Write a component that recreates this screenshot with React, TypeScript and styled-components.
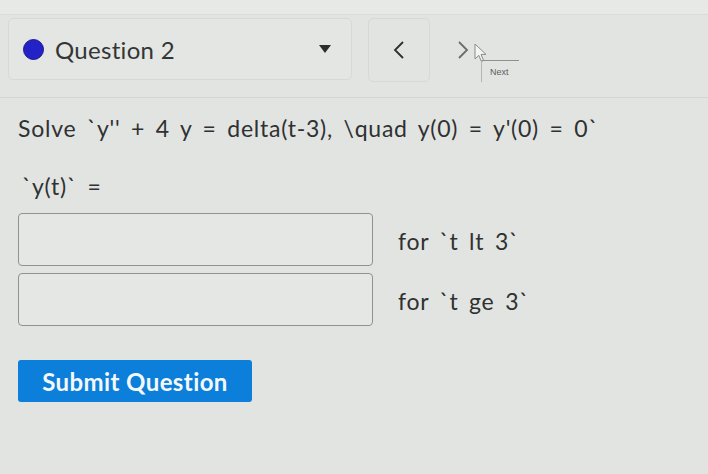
import React from 'react';
import styled, { createGlobalStyle } from 'styled-components';

const GlobalStyle = createGlobalStyle`
  html, body {
    margin: 0;
    padding: 0;
    background: #e2e4e1;
    font-family: Lato, "Open Sans", "Liberation Sans", sans-serif;
    color: #2f3132;
  }
`;

const Page = styled.div`
  width: 708px;
  height: 474px;
  overflow: hidden;
`;

const TopStrip = styled.div`
  height: 14px;
  background: #e7e9e6;
  border-bottom: 1px solid #dadcd9;
`;

const NavBar = styled.div`
  display: flex;
  align-items: flex-start;
  padding: 3px 0 15px 8px;
  border-bottom: 1px solid #d3d5d2;
`;

const QuestionSelect = styled.div`
  width: 344px;
  height: 62px;
  box-sizing: border-box;
  display: flex;
  align-items: center;
  padding: 0 14px;
  border: 1px solid #d7d9d6;
  border-radius: 5px;
  background: #e4e6e3;
`;

const Dot = styled.span`
  width: 19px;
  height: 19px;
  border-radius: 50%;
  background: #2222c6;
  border: 1px solid #1a1a8a;
  margin-right: 11px;
`;

const SelectLabel = styled.span`
  flex: 1;
  font-size: 24px;
  letter-spacing: 0.3px;
  color: #333536;
`;

const Caret = styled.span`
  width: 0;
  height: 0;
  border-left: 6px solid transparent;
  border-right: 6px solid transparent;
  border-top: 8px solid #2b2d2e;
  margin-right: 6px;
`;

const NavButton = styled.div<{ $boxed?: boolean }>`
  width: 62px;
  height: 64px;
  margin-left: ${(p) => (p.$boxed ? '16px' : '2px')};
  box-sizing: border-box;
  display: flex;
  align-items: center;
  justify-content: center;
  border: 1px solid ${(p) => (p.$boxed ? '#d7d9d6' : 'transparent')};
  border-radius: 5px;
`;

const NextWrap = styled.div`
  position: relative;
`;

const Tooltip = styled.div`
  position: absolute;
  left: 51px;
  top: 42px;
  width: 38px;
  height: 22px;
  padding: 6px 0 0 8px;
  box-sizing: border-box;
  border-left: 1px solid #b4b6b3;
  border-top: 1px solid #8f918e;
  font-family: "Liberation Sans", sans-serif;
  font-size: 9px;
  color: #5b5d5e;
`;

const Pointer = styled.svg`
  position: absolute;
  left: 44px;
  top: 25px;
`;

const Content = styled.div`
  padding: 16px 18px 0 18px;
`;

const Text = styled.p`
  margin: 0;
  font-size: 23px;
  line-height: 28px;
  letter-spacing: 0.75px;
  word-spacing: 4px;
  color: #2f3132;
`;

const AnswerLabel = styled(Text)`
  margin: 30px 0 0 4px;
`;

const Rows = styled.div`
  display: flex;
  flex-direction: column;
  gap: 7px;
  margin-top: 13px;
`;

const AnswerRow = styled.div`
  display: flex;
  align-items: center;
  gap: 25px;
`;

const AnswerInput = styled.input`
  width: 355px;
  height: 53px;
  box-sizing: border-box;
  border: 1px solid #90928f;
  border-radius: 4px;
  background: #e5e7e4;
  outline: none;
`;

const Condition = styled(Text)`
  margin-top: 2px;
`;

const SubmitButton = styled.button`
  margin-top: 34px;
  width: 234px;
  height: 42px;
  border: none;
  border-radius: 3px;
  background: #0b7fd9;
  color: #f4f8fb;
  font-family: Lato, "Open Sans", sans-serif;
  font-weight: 700;
  font-size: 24px;
  letter-spacing: 0.4px;
  padding: 0;
`;

export default function App() {
  return (
    <Page>
      <GlobalStyle />
      <TopStrip />
      <NavBar>
        <QuestionSelect>
          <Dot />
          <SelectLabel>Question 2</SelectLabel>
          <Caret />
        </QuestionSelect>
        <NavButton $boxed>
          <svg width="12" height="20" viewBox="0 0 12 20">
            <path d="M10 2 L2 10 L10 18" fill="none" stroke="#2c2e2f" strokeWidth="1.8" />
          </svg>
        </NavButton>
        <NextWrap>
          <NavButton>
            <svg width="12" height="20" viewBox="0 0 12 20">
              <path d="M2 2 L10 10 L2 18" fill="none" stroke="#6a6c6d" strokeWidth="1.8" />
            </svg>
          </NavButton>
          <Pointer width="14" height="21" viewBox="0 0 14 21">
            <path d="M1 1 L1 16 L4.8 12.3 L7.4 18.5 L9.6 17.5 L7 11.4 L12 11.4 Z" fill="#f4f5f3" stroke="#8a8c89" strokeWidth="1" />
          </Pointer>
          <Tooltip>Next</Tooltip>
        </NextWrap>
      </NavBar>
      <Content>
        <Text>Solve `y'' + 4 y = delta(t-3), \quad y(0) = y'(0) = 0`</Text>
        <AnswerLabel>`y(t)` =</AnswerLabel>
        <Rows>
          <AnswerRow>
            <AnswerInput />
            <Condition>for `t lt 3`</Condition>
          </AnswerRow>
          <AnswerRow>
            <AnswerInput />
            <Condition>for `t ge 3`</Condition>
          </AnswerRow>
        </Rows>
        <SubmitButton>Submit Question</SubmitButton>
      </Content>
    </Page>
  );
}
